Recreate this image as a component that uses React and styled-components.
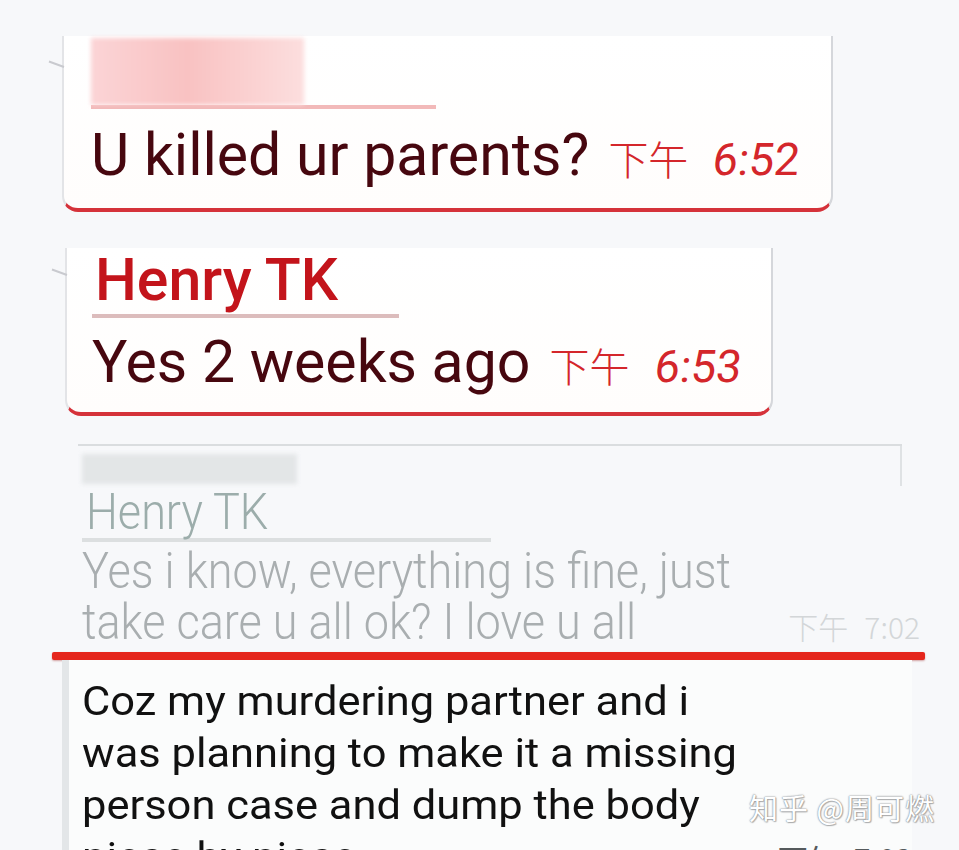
import React from 'react';
import styled, { createGlobalStyle } from 'styled-components';

const Global = createGlobalStyle`
  html, body { margin: 0; padding: 0; background: #f7f8fa; }
  body { font-family: Roboto, "Noto Sans CJK SC", sans-serif; }
`;

const Page = styled.div`
  position: relative;
  width: 959px;
  height: 850px;
  overflow: hidden;
  box-sizing: border-box;
  padding-top: 36px;
  background: #f7f8fa;
  display: flex;
  flex-direction: column;
  & > * { flex-shrink: 0; }
`;

const Bubble = styled.div`
  position: relative;
  box-sizing: border-box;
  margin-left: ${p => p.$left}px;
  margin-bottom: ${p => p.$mb}px;
  width: ${p => p.$width}px;
  padding: ${p => p.$pt}px 0 ${p => p.$pb}px ${p => p.$pl}px;
  background: linear-gradient(180deg, #ffffff 0%, #fffdfc 100%);
  border-left: 2px solid #e3e4e7;
  border-right: 2px solid #d5d7db;
  border-bottom: 4px solid #d5323a;
  border-radius: 0 0 16px 16px;
  display: flex;
  flex-direction: column;
  align-items: flex-start;

  &::before {
    content: '';
    position: absolute;
    left: -16px;
    top: ${p => p.$tail}px;
    width: 16px;
    height: 2px;
    background: #c9cacf;
    transform: rotate(20deg);
    transform-origin: right center;
  }
`;

const NameRule = styled.div`
  width: ${p => p.$w}px;
  margin-top: ${p => p.$mt || 0}px;
  border-bottom: 4px solid ${p => p.$color};
  padding-bottom: ${p => p.$pb}px;
  display: flex;
`;

const Redacted = styled.div`
  width: ${p => p.$w}px;
  height: ${p => p.$h}px;
  margin-top: ${p => p.$mt || 0}px;
  margin-left: ${p => p.$ml || 0}px;
  background: ${p => p.$bg};
  filter: blur(2px);
`;

const Name = styled.div`
  font-size: 59px;
  line-height: 62px;
  font-weight: 500;
  color: #c3141b;
  padding-left: 3px;
`;

const MessageLine = styled.div`
  margin-top: ${p => p.$mt}px;
  height: 70px;
  font-size: 59px;
  line-height: 70px;
  color: #47070f;
  white-space: nowrap;
  display: flex;
  align-items: baseline;
`;

const Time = styled.span`
  margin-left: 19px;
  line-height: 1;
  color: #d4262b;
  display: inline-flex;
  align-items: baseline;
  gap: 25px;
`;

const TimeCjk = styled.span`
  font-family: "Noto Sans CJK SC", sans-serif;
  font-size: 40px;
  font-weight: 300;
`;

const TimeDigits = styled.span`
  display: inline-block;
  transform: skewX(-6deg);
  font-size: 45px;
`;

const Faded = styled.div`
  position: relative;
  box-sizing: border-box;
  margin-left: 78px;
  width: 824px;
  border-top: 2px solid #dadddf;
  padding: 8px 0 0 4px;
  display: flex;
  flex-direction: column;
  align-items: flex-start;

  &::after {
    content: '';
    position: absolute;
    right: 0;
    top: 0;
    width: 2px;
    height: 40px;
    background: #dfe2e4;
  }
`;

const Condensed = styled.span`
  display: inline-block;
  transform: scaleX(${p => p.$sx});
  transform-origin: left center;
  white-space: nowrap;
`;

const FadedName = styled.div`
  font-size: 50px;
  line-height: 52px;
  font-weight: 300;
  color: #9cadab;
  padding-left: 4px;
`;

const FadedRow = styled.div`
  margin-top: ${p => p.$mt || 0}px;
  width: 100%;
  height: 51px;
  display: flex;
  align-items: baseline;
  justify-content: space-between;
  font-size: 50px;
  line-height: 51px;
  font-weight: 300;
  color: #a9aeb0;
`;

const FadedTime = styled.span`
  font-size: 30px;
  line-height: 1;
  color: #d3d6d8;
  margin-right: -18px;
  font-family: "Noto Sans CJK SC", Roboto, sans-serif;
  font-weight: 300;
  display: inline-flex;
  gap: 16px;
`;

const RedRule = styled.div`
  margin-top: ${p => p.$mt}px;
  margin-left: 52px;
  width: 873px;
  height: 8px;
  background: #e5261c;
  border-radius: 2px;
  box-shadow: 0 1px 2px rgba(140, 0, 0, 0.35);
`;

const BottomBubble = styled.div`
  box-sizing: border-box;
  margin-left: 62px;
  width: 850px;
  flex: 1 0 auto;
  border-left: 7px solid #e3e6e8;
  background: #fbfcfc;
  padding: 15px 0 0 13px;
`;

const BottomRow = styled.div`
  height: 52px;
  display: flex;
  align-items: baseline;
  justify-content: space-between;
  font-size: 41px;
  line-height: 52px;
  color: #111111;
`;

const BottomTime = styled.span`
  font-family: "Noto Sans CJK SC", Roboto, sans-serif;
  font-size: 30px;
  line-height: 1;
  color: #555a5c;
  display: inline-flex;
  gap: 16px;
`;

const Watermark = styled.div`
  position: absolute;
  right: 24px;
  bottom: 22px;
  font-family: "Noto Sans CJK SC", sans-serif;
  font-size: 29px;
  letter-spacing: 1px;
  color: #ffffff;
  text-shadow: 0 0 1px #8a8d90, 0 0 2px #8a8d90, 1px 1px 1px rgba(0,0,0,0.25);
`;

export default function App() {
  return (
    <>
      <Global />
      <Page>
        <Bubble $left={62} $width={771} $pt={2} $pb={18} $pl={27} $mb={36} $tail={30}>
          <NameRule $w={345} $pb={0} $color="#f2b9b9">
            <Redacted $w={213} $h={67} $bg="linear-gradient(90deg, #fbd4d6 0%, #f9c2c2 45%, #fcdede 100%)" />
          </NameRule>
          <MessageLine $mt={11}>
            U killed ur parents?
            <Time>
              <TimeCjk>下午</TimeCjk>
              <TimeDigits>6:52</TimeDigits>
            </Time>
          </MessageLine>
        </Bubble>

        <Bubble $left={65} $width={708} $pt={1} $pb={15} $pl={25} $mb={28} $tail={26}>
          <NameRule $w={307} $pb={3} $color="#dcbcbc">
            <Name>Henry TK</Name>
          </NameRule>
          <MessageLine $mt={9}>
            Yes 2 weeks ago
            <Time>
              <TimeCjk>下午</TimeCjk>
              <TimeDigits>6:53</TimeDigits>
            </Time>
          </MessageLine>
        </Bubble>

        <Faded>
          <Redacted $w={215} $h={30} $bg="#e3e6e7" />
          <NameRule $w={409} $mt={2} $pb={0} $color="#dcdfe0">
            <FadedName>
              <Condensed $sx={0.9}>Henry TK</Condensed>
            </FadedName>
          </NameRule>
          <FadedRow $mt={4}>
            <Condensed $sx={0.9}>Yes i know, everything is fine, just</Condensed>
          </FadedRow>
          <FadedRow>
            <Condensed $sx={0.9}>take care u all ok? I love u all</Condensed>
            <FadedTime><span>下午</span><span>7:02</span></FadedTime>
          </FadedRow>
        </Faded>

        <RedRule $mt={4} />

        <BottomBubble>
          <BottomRow><Condensed $sx={1.06}>Coz my murdering partner and i</Condensed></BottomRow>
          <BottomRow><Condensed $sx={1.06}>was planning to make it a missing</Condensed></BottomRow>
          <BottomRow><Condensed $sx={1.06}>person case and dump the body</Condensed></BottomRow>
          <BottomRow>
            <Condensed $sx={1.06}>piece by piece</Condensed>
            <BottomTime><span>下午</span><span>7:03</span></BottomTime>
          </BottomRow>
        </BottomBubble>

        <Watermark>知乎 @周可燃</Watermark>
      </Page>
    </>
  );
}
